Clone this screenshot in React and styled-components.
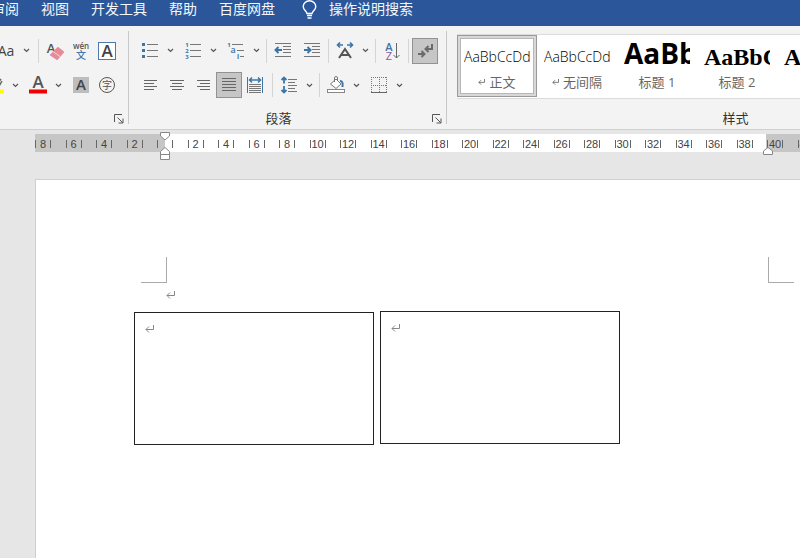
import React, { useState } from "react";
import styled, { createGlobalStyle } from "styled-components";

const GlobalStyle = createGlobalStyle`
  * {
    box-sizing: border-box;
  }

  body {
    margin: 0;
    overflow: hidden;
    font-family: "Open Sans", "Noto Sans CJK SC", sans-serif;
  }

  button {
    font: inherit;
    color: inherit;
    background: none;
    border: none;
    padding: 0;
    cursor: pointer;
  }

  svg {
    display: block;
    flex-shrink: 0;
  }
`;

const Window = styled.div`
  display: flex;
  flex-direction: column;
  min-height: 100vh;
  overflow: hidden;
  background: #e6e6e6;
`;

const MenuBar = styled.nav`
  display: flex;
  align-items: flex-start;
  gap: 22px;
  height: 26px;
  background: #2b579a;
  color: #f4f7fb;
  overflow: hidden;
`;

const MenuTab = styled.button`
  font-size: 14px;
  line-height: 18px;
  white-space: nowrap;

  &:first-child {
    margin-left: -9px;
  }
`;

const TellMe = styled(MenuTab)`
  display: flex;
  gap: 12px;
  padding-left: 5px;
`;

const Ribbon = styled.div`
  display: flex;
  height: 104px;
  padding: 5px 0;
  background: #f3f3f3;
  border-bottom: 1px solid #d0d0d0;
`;

const Group = styled.section`
  display: flex;
  flex-direction: column;
  flex: 0 0 ${(p) => p.$width}px;
  min-width: 0;
  width: ${(p) => p.$width}px;
  padding: 0 8px;
  border-right: 1px solid #c8c8c8;
`;

const ToolRow = styled.div`
  display: flex;
  align-items: center;
  justify-content: ${(p) => (p.$end ? "flex-end" : "flex-start")};
  gap: 3px;
  height: ${(p) => (p.$tall ? 39 : 30)}px;
`;

const Cluster = styled.div`
  display: flex;
  flex-shrink: 0;
  padding: 0 ${(p) => p.$pad || 0}px;
`;

const Tool = styled.button`
  display: flex;
  align-items: center;
  justify-content: center;
  flex-shrink: 0;
  width: 26px;
  height: 26px;
  font-size: 14px;
  color: #444;
  background: ${(p) => (p.$active ? "#c6c6c6" : "none")};
  border: ${(p) => (p.$active ? "1px solid #929292" : "none")};
`;

const Arrow = styled(Tool)`
  width: 14px;
`;

const Divider = styled.span`
  flex-shrink: 0;
  width: 1px;
  height: 24px;
  background: #d4d4d4;
`;

const GroupFooter = styled.div`
  display: flex;
  align-items: flex-start;
  justify-content: flex-end;
  height: 16px;
  margin-top: auto;
  margin-right: -4px;
  padding-top: 6px;
`;

const GroupTitle = styled.h2`
  flex: 1;
  margin: -4px 0 0;
  padding-right: ${(p) => (p.$wide ? 4 : 12)}px;
  text-align: center;
  font-size: 13px;
  font-weight: 400;
  line-height: 16px;
  color: #333;
`;

const Gallery = styled.div`
  display: flex;
  height: 65px;
  margin-top: 3px;
  margin-left: 2px;
  background: #fff;
  border: 1px solid #dcdcdc;
  border-left: none;
  overflow: hidden;
`;

const StyleCard = styled.button`
  display: flex;
  flex-direction: column;
  gap: 3px;
  flex: 0 0 80px;
  height: 62px;
  padding: 0 7px;
  box-shadow: ${(p) =>
    p.$active
      ? "inset 0 0 0 1px #9a9a9a, inset 0 0 0 3px #d8d8d8, inset 0 0 0 4px #b8b8b8"
      : "none"};
`;

const Sample = styled.span`
  display: flex;
  align-items: flex-end;
  width: 66px;
  height: 34px;
  overflow: hidden;
  white-space: nowrap;
  color: #000;
  font-family: ${(p) => (p.$serif ? '"Liberation Serif", serif' : '"Open Sans", sans-serif')};
  font-size: ${(p) => p.$size}px;
  font-weight: ${(p) => (p.$bold ? 700 : 300)};
  line-height: ${(p) => (p.$bold && !p.$serif ? 32 : 24)}px;
`;

const StyleName = styled.span`
  display: flex;
  align-items: center;
  justify-content: center;
  gap: 4px;
  width: 66px;
  font-size: 13px;
  line-height: 20px;
  color: #666;
`;

const RulerBar = styled.div`
  position: relative;
  padding: 4px 0 0 35px;
  height: 30px;
`;

const RulerTrack = styled.div`
  height: 18px;
  padding-top: 2px;
  overflow: hidden;
  background: linear-gradient(to right, #c6c6c6 130px, #fff 130px, #fff 731px, #c6c6c6 731px);
`;

const RulerScale = styled.div`
  display: grid;
  grid-template-columns: repeat(13, 30px 31px);
  justify-items: center;
  align-items: center;
  height: 100%;
  margin-left: -7px;
`;

const RulerMark = styled.span`
  width: 16px;
  height: 8px;
  border: solid #666;
  border-width: 0 1px;
  text-align: center;
  font-family: "Liberation Sans", sans-serif;
  font-size: 11px;
  line-height: 8px;
  color: #444;
`;

const Indent = styled.svg`
  position: absolute;
  left: ${(p) => p.$x}px;
  top: ${(p) => p.$y}px;
`;

const Workspace = styled.main`
  display: flex;
  flex: 1;
  padding: 19px 0 0 35px;
`;

const Sheet = styled.article`
  position: relative;
  flex: 1;
  padding: 77px 6px 0 105px;
  background: #fff;
  border: solid #cfcfcf;
  border-width: 1px 0 0 1px;
`;

const MarginRow = styled.div`
  display: flex;
  justify-content: space-between;
`;

const Corner = styled.span`
  width: 26px;
  height: 26px;
  border: solid #aaa;
  border-width: ${(p) => (p.$right ? "0 0 1px 1px" : "0 1px 1px 0")};
`;

const Paragraph = styled.p`
  margin: 0;
  padding: 8px 25px;
`;

const TextBox = styled.div`
  position: absolute;
  left: ${(p) => p.$x}px;
  top: ${(p) => p.$y}px;
  width: 240px;
  height: 133px;
  padding: 12px 10px;
  border: 1px solid #222;
`;

const Chevron = () => (
  <svg width="7" height="5" viewBox="0 0 7 5" fill="none" stroke="#555" strokeWidth="1.2">
    <path d="M1 1l2.5 2.5L6 1" />
  </svg>
);

const ReturnMark = ({ small }) => (
  <svg
    width={small ? 7 : 9}
    height={small ? 6 : 8}
    viewBox="0 0 9 8"
    fill="none"
    stroke={small ? "#555" : "#888"}
    strokeWidth="1"
  >
    <path d="M8.5 0v4.5H1M4 1.5l-3 3 3 3" />
  </svg>
);

const Icon = ({ w = 18, h = 18, children }) => (
  <svg width={w} height={h} viewBox={`0 0 ${w} ${h}`} fill="none" stroke="#777" strokeWidth="1">
    {children}
  </svg>
);

// lines of text inside an icon, as [x1, x2, y]
const Lines = ({ rows, color = "#777" }) => (
  <path stroke={color} d={rows.map(([a, b, y]) => `M${a} ${y}.5H${b}`).join("")} />
);

const Glyph = ({ x, y, size, fill = "#555", weight = 400, children }) => (
  <text
    x={x}
    y={y}
    fontSize={size}
    fill={fill}
    stroke="none"
    fontWeight={weight}
    fontFamily={'"Open Sans", "Noto Sans CJK SC", sans-serif'}
    textAnchor="middle"
  >
    {children}
  </text>
);

const Bulb = () => (
  <svg width="15" height="19" viewBox="0 0 15 19" fill="none" stroke="#fff" strokeWidth="1.4">
    <path d="M5 13.5c0-2-3.8-3.4-3.8-7a6.3 5.8 0 0 1 12.6 0c0 3.6-3.8 5-3.8 7zM5 15.5h5M5.5 18h4" />
  </svg>
);

const ClearFormat = () => (
  <Icon>
    <Glyph x={5} y={11} size={13} weight={600}>A</Glyph>
    <path d="M12 6l5 4-6 7-6-4z" fill="#e58b99" stroke="#e58b99" strokeWidth="2" strokeLinejoin="round" />
    <path d="M7 9.5l7 5" stroke="#f3d5d9" />
  </Icon>
);

const Phonetic = () => (
  <Icon>
    <Glyph x={9} y={7} size={8} weight={600}>wén</Glyph>
    <Glyph x={9} y={17} size={10} fill="#3c78b4" weight={500}>文</Glyph>
  </Icon>
);

const CharBorder = () => (
  <Icon>
    <rect x="0.5" y="0.5" width="17" height="17" fill="#fff" stroke="#4f79a8" />
    <Glyph x={9} y={15} size={17} fill="#444" weight={600}>A</Glyph>
  </Icon>
);

const Highlighter = () => (
  <Icon>
    <path d="M9 11l6-8M12 12l4-7" stroke="#666" strokeWidth="1.5" />
    <path d="M1 15.5h17" stroke="#ff0" strokeWidth="4" />
  </Icon>
);

const FontColor = () => (
  <Icon>
    <Glyph x={9} y={12} size={17} weight={600}>A</Glyph>
    <path d="M0 15.5h18" stroke="#f00000" strokeWidth="4" />
  </Icon>
);

const CharShading = () => (
  <Icon>
    <rect x="1" y="1" width="16" height="16" fill="#bdbdbd" stroke="none" />
    <Glyph x={9} y={14} size={15} fill="#444" weight={600}>A</Glyph>
  </Icon>
);

const EnclosedChar = () => (
  <Icon>
    <circle cx="9" cy="9" r="7.5" stroke="#555" />
    <Glyph x={9} y={13} size={10}>字</Glyph>
  </Icon>
);

const Bullets = () => (
  <Icon>
    <path d="M1 2.5h3M1 8.5h3M1 14.5h3" stroke="#3e75a8" strokeWidth="3" />
    <Lines rows={[[6, 17, 2], [6, 17, 8], [6, 17, 14]]} />
  </Icon>
);

const Numbering = () => (
  <Icon>
    {[1, 2, 3].map((n) => (
      <Glyph key={n} x={3} y={n * 6 - 1} size={6} weight={700} fill="#3e75a8">{n}</Glyph>
    ))}
    <Lines rows={[[6, 17, 2], [6, 17, 8], [6, 17, 14]]} />
  </Icon>
);

const Multilevel = () => (
  <Icon>
    <Glyph x={2} y={5} size={6} weight={700} fill="#3e75a8">1</Glyph>
    <Glyph x={6} y={11} size={9} weight={600} fill="#3e75a8">a</Glyph>
    <Glyph x={11} y={17} size={7} weight={700} fill="#3e75a8">i</Glyph>
    <Lines rows={[[5, 16, 2], [10, 17, 8], [13, 17, 14]]} />
  </Icon>
);

const IndentIcon = ({ more }) => (
  <Icon>
    <Lines rows={[[1, 17, 1], [9, 17, 4], [9, 17, 7], [9, 17, 10], [1, 17, 14]]} />
    <path
      d={more ? "M1 8h6.5M4.5 5l3 3-3 3" : "M8 8H1.5M4.5 5l-3 3 3 3"}
      stroke="#3e75a8"
      strokeWidth="2"
    />
  </Icon>
);

const AsianLayout = () => (
  <Icon>
    <path d="M3 16L9 7l6 9M5.5 13h7" stroke="#555" strokeWidth="2" />
    <path d="M7 3H1.5M4 0.5L1.5 3 4 5.5M11 3h5.5M14 0.5L16.5 3 14 5.5" stroke="#3e75a8" strokeWidth="1.6" />
  </Icon>
);

const Sort = () => (
  <Icon>
    <Glyph x={6} y={9} size={11} weight={600} fill="#3e75a8">A</Glyph>
    <Glyph x={6} y={18} size={11} fill="#8a5a9e">Z</Glyph>
    <path d="M13.5 1v15M10.5 13l3 3 3-3" stroke="#666" />
  </Icon>
);

const ShowMarks = () => (
  <Icon>
    <path d="M16 2v5H10M12.5 4L9.5 7l3 3M2 12h6M5.5 9L8.5 12l-3 3" stroke="#6a6a6a" strokeWidth="2" />
  </Icon>
);

const alignRows = {
  left: [[2, 15, 4], [2, 12, 7], [2, 15, 10], [2, 12, 13]],
  center: [[2, 16, 4], [4, 14, 7], [2, 16, 10], [4, 14, 13]],
  right: [[3, 16, 4], [6, 16, 7], [3, 16, 10], [6, 16, 13]],
  justify: [[2, 16, 2], [2, 16, 5], [2, 16, 8], [2, 16, 11], [2, 16, 14]],
};

const AlignIcon = ({ align }) => (
  <Icon>
    <Lines color="#666" rows={alignRows[align]} />
  </Icon>
);

const Distribute = () => (
  <Icon>
    <path d="M1.5 1v16M16.5 1v16" stroke="#3e75a8" />
    <path d="M3.5 4h11M6 1.5L3.5 4 6 6.5M12 1.5L14.5 4 12 6.5" stroke="#3e75a8" strokeWidth="1.5" />
    <Lines rows={[8, 10, 12, 14, 16].map((y) => [3, 15, y])} />
  </Icon>
);

const LineSpacing = () => (
  <Icon>
    <path d="M4 1.5v6M1.5 4L4 1.5 6.5 4M4 10v6.5M1.5 14L4 16.5 6.5 14" stroke="#3e75a8" strokeWidth="1.8" />
    <Lines rows={[[8, 17, 3], [8, 15, 6], [8, 17, 9], [8, 15, 12], [8, 17, 15]]} />
  </Icon>
);

const Shading = () => (
  <Icon>
    <path d="M3.5 8L9 3l5 5-5 4.5zM7.5 6V2a1.5 1.5 0 0 1 3 0v3" stroke="#777" fill="#fff" />
    <path d="M13 5c2.5 0 3 2 2.5 6" stroke="#3e75a8" strokeWidth="2" />
    <rect x="0.5" y="13.5" width="17" height="3" fill="#fff" stroke="#888" />
  </Icon>
);

const Borders = () => (
  <Icon>
    <path d="M1.5 1v15M9.5 1v15M16.5 1v15M1 1.5h16M1 9.5h16" stroke="#777" strokeDasharray="1 1" />
    <path d="M1 16.5h16" stroke="#666" />
  </Icon>
);

const Launcher = () => (
  <Icon w={10} h={10}>
    <path d="M0.5 8V0.5H8M3.5 3.5l5 5M9 4.5V9H4.5" stroke="#555" />
  </Icon>
);

const Split = ({ label, children }) => (
  <Cluster>
    <Tool aria-label={label}>{children}</Tool>
    <Arrow aria-label={`${label} ▾`}>
      <Chevron />
    </Arrow>
  </Cluster>
);

const styleCards = [
  { name: "正文", sample: "AaBbCcDd", size: 14, mark: true },
  { name: "无间隔", sample: "AaBbCcDd", size: 14, mark: true },
  { name: "标题 1", sample: "AaBb", size: 28, bold: true },
  { name: "标题 2", sample: "AaBbC", size: 24, bold: true, serif: true },
  { name: "标题", sample: "AaBbC", size: 24, bold: true, serif: true },
];

const rulerNumbers = Array.from({ length: 26 }, (_, i) => Math.abs(i * 2 - 8));

const textBoxes = [
  { x: 98, y: 132 },
  { x: 344, y: 131 },
];

const App = () => {
  const [marks, setMarks] = useState(true);
  const [current, setCurrent] = useState("正文");

  return (
    <>
      <GlobalStyle />
      <Window>
        <MenuBar>
          {["审阅", "视图", "开发工具", "帮助", "百度网盘"].map((tab) => (
            <MenuTab key={tab}>{tab}</MenuTab>
          ))}
          <TellMe>
            <Bulb />
            操作说明搜索
          </TellMe>
        </MenuBar>

        <Ribbon>
          <Group $width={129}>
            <ToolRow $end $tall>
              <Cluster $pad={2}>
                <Tool aria-label="更改大小写">Aa</Tool>
                <Arrow aria-label="更改大小写 ▾">
                  <Chevron />
                </Arrow>
              </Cluster>
              <Divider />
              <Cluster>
                <Tool aria-label="清除格式"><ClearFormat /></Tool>
                <Tool aria-label="拼音指南"><Phonetic /></Tool>
                <Tool aria-label="字符边框"><CharBorder /></Tool>
              </Cluster>
            </ToolRow>
            <ToolRow $end>
              <Split label="突出显示"><Highlighter /></Split>
              <Split label="字体颜色"><FontColor /></Split>
              <Cluster>
                <Tool aria-label="字符底纹"><CharShading /></Tool>
                <Tool aria-label="带圈字符"><EnclosedChar /></Tool>
              </Cluster>
            </ToolRow>
            <GroupFooter>
              <button aria-label="字体设置"><Launcher /></button>
            </GroupFooter>
          </Group>

          <Group $width={318}>
            <ToolRow $tall>
              <Split label="项目符号"><Bullets /></Split>
              <Split label="编号"><Numbering /></Split>
              <Split label="多级列表"><Multilevel /></Split>
              <Divider />
              <Tool aria-label="减少缩进量"><IndentIcon /></Tool>
              <Tool aria-label="增加缩进量"><IndentIcon more /></Tool>
              <Divider />
              <Split label="中文版式"><AsianLayout /></Split>
              <Divider />
              <Tool aria-label="排序"><Sort /></Tool>
              <Divider />
              <Tool aria-label="显示编辑标记" $active={marks} onClick={() => setMarks(!marks)}>
                <ShowMarks />
              </Tool>
            </ToolRow>
            <ToolRow>
              <Cluster $pad={1}>
                <Tool aria-label="左对齐"><AlignIcon align="left" /></Tool>
                <Tool aria-label="居中"><AlignIcon align="center" /></Tool>
                <Tool aria-label="右对齐"><AlignIcon align="right" /></Tool>
                <Tool aria-label="两端对齐" $active><AlignIcon align="justify" /></Tool>
                <Tool aria-label="分散对齐"><Distribute /></Tool>
              </Cluster>
              <Divider />
              <Split label="行距"><LineSpacing /></Split>
              <Divider />
              <Split label="底纹"><Shading /></Split>
              <Split label="边框"><Borders /></Split>
            </ToolRow>
            <GroupFooter>
              <GroupTitle>段落</GroupTitle>
              <button aria-label="段落设置"><Launcher /></button>
            </GroupFooter>
          </Group>

          <Group $width={578}>
            <Gallery>
              {styleCards.map((s) => (
                <StyleCard key={s.name} $active={s.name === current} onClick={() => setCurrent(s.name)}>
                  <Sample $size={s.size} $bold={s.bold} $serif={s.serif}>{s.sample}</Sample>
                  <StyleName>
                    {s.mark && <ReturnMark small />}
                    {s.name}
                  </StyleName>
                </StyleCard>
              ))}
            </Gallery>
            <GroupFooter>
              <GroupTitle $wide>样式</GroupTitle>
            </GroupFooter>
          </Group>
        </Ribbon>

        <RulerBar>
          <RulerTrack>
            <RulerScale>
              {rulerNumbers.map((n, i) => (
                <RulerMark key={i}>{n || ""}</RulerMark>
              ))}
            </RulerScale>
          </RulerTrack>
          <Indent $x={160} $y={2} width="10" height="28" viewBox="0 0 10 28" fill="#fff" stroke="#888">
            <path d="M0.5 0.5h9v3.5L5 8 0.5 4zM0.5 27.5v-8L5 15.5l4.5 4v8zM0.5 22.5h9" />
          </Indent>
          <Indent $x={763} $y={17} width="10" height="8" viewBox="0 0 10 8" fill="#fff" stroke="#888">
            <path d="M0.5 7.5v-3.5L5 0.5l4.5 3.5v3.5z" />
          </Indent>
        </RulerBar>

        <Workspace>
          <Sheet>
            <MarginRow>
              <Corner />
              <Corner $right />
            </MarginRow>
            <Paragraph>{marks && <ReturnMark />}</Paragraph>
            {textBoxes.map((box) => (
              <TextBox key={box.x} $x={box.x} $y={box.y}>
                {marks && <ReturnMark />}
              </TextBox>
            ))}
          </Sheet>
        </Workspace>
      </Window>
    </>
  );
};

export default App;
